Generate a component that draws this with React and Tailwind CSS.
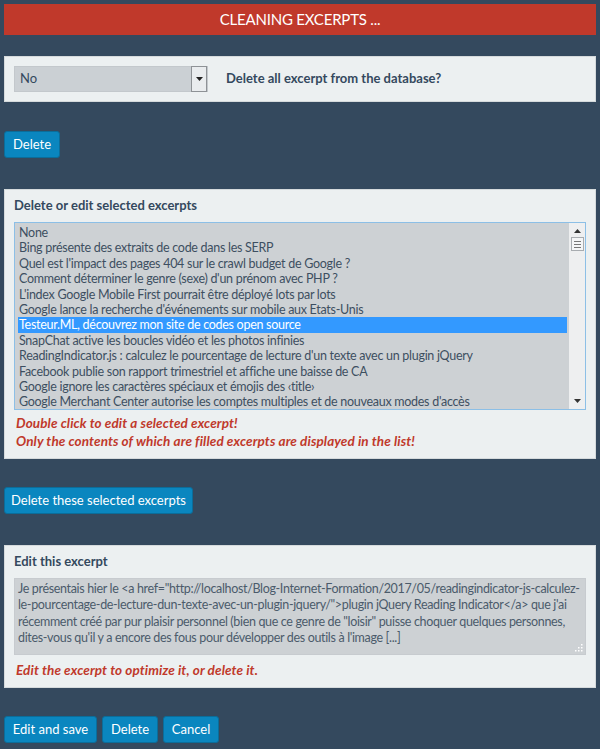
import React from "react";

const items = [
  "None",
  "Bing présente des extraits de code dans les SERP",
  "Quel est l'impact des pages 404 sur le crawl budget de Google ?",
  "Comment déterminer le genre (sexe) d'un prénom avec PHP ?",
  "L'index Google Mobile First pourrait être déployé lots par lots",
  "Google lance la recherche d'événements sur mobile aux Etats-Unis",
  "Testeur.ML, découvrez mon site de codes open source",
  "SnapChat active les boucles vidéo et les photos infinies",
  "ReadingIndicator.js : calculez le pourcentage de lecture d'un texte avec un plugin jQuery",
  "Facebook publie son rapport trimestriel et affiche une baisse de CA",
  "Google ignore les caractères spéciaux et émojis des ‹title›",
  "Google Merchant Center autorise les comptes multiples et de nouveaux modes d'accès",
];

const textLines = [
  'Je présentais hier le <a href="http://localhost/Blog-Internet-Formation/2017/05/readingindicator-js-calculez-',
  'le-pourcentage-de-lecture-dun-texte-avec-un-plugin-jquery/">plugin jQuery Reading Indicator</a> que j\'ai',
  'récemment créé par pur plaisir personnel (bien que ce genre de "loisir" puisse choquer quelques personnes,',
  "dites-vous qu'il y a encore des fous pour développer des outils à l'image [...]",
];

function Btn({ children, w }) {
  return (
    <button
      className={`h-[27px] ${w} rounded-[3px] bg-[#0a86bf] border border-[#0b6d9a] text-white text-[13px] flex items-center justify-center`}
    >
      {children}
    </button>
  );
}

export default function App() {
  return (
    <div
      className="min-h-[749px] bg-[#34495e] p-1 text-[#34495e]"
      style={{ fontFamily: "Lato, 'Open Sans', sans-serif" }}
    >
      <div className="h-[31px] bg-[#c0392b] flex items-center justify-center text-white text-[15px] tracking-[-0.2px]">
        CLEANING EXCERPTS ...
      </div>

      <div className="mt-[21px] h-[46px] bg-[#ecf0f1] border border-[#d5dadc] flex items-center pl-[9px]">
        <div className="w-[194px] h-[26px] bg-[#cbd0d4] border border-[#c3c8cc] flex items-center">
          <span className="flex-1 pl-[5px] text-[13px] text-[#34495e]">No</span>
          <div className="w-[16px] h-[26px] bg-[#e9ecee] border border-[#8e9296] flex items-center justify-center">
            <svg width="7" height="4" viewBox="0 0 7 4">
              <path d="M0 0 L7 0 L3.5 4 Z" fill="#222" />
            </svg>
          </div>
        </div>
        <span className="ml-[18px] text-[13px] font-bold text-[#34495e]">
          Delete all excerpt from the database?
        </span>
      </div>

      <div className="mt-[29px]">
        <Btn w="w-[56px]">Delete</Btn>
      </div>

      <div className="mt-[31px] h-[270px] bg-[#ecf0f1] border border-[#d5dadc] px-[9px] pt-[7px]">
        <div className="text-[13px] font-bold leading-[16px] text-[#34495e]">
          Delete or edit selected excerpts
        </div>
        <div className="mt-[9px] h-[188px] border border-[#8cbfe6] bg-[#cdd1d4] flex overflow-hidden">
          <div className="flex-1 pt-[2px] pl-[3px] pr-[2px]">
            {items.map((t, i) => (
              <div
                key={i}
                className={`h-[15.4px] leading-[15.4px] text-[12.5px] tracking-[-0.28px] whitespace-nowrap pl-[1px] ${
                  i === 6 ? "bg-[#3399ff] text-white" : "text-[#3d4f61]"
                }`}
              >
                {t}
              </div>
            ))}
          </div>
          <div className="w-[16px] bg-[#eeeff0] flex flex-col items-center">
            <svg className="mt-[6px]" width="7" height="4" viewBox="0 0 7 4">
              <path d="M3.5 0 L7 4 L0 4 Z" fill="#333" />
            </svg>
            <div className="mt-[4px] w-[13px] h-[14px] border border-[#a8acb0] bg-[#f4f5f6] flex flex-col items-center justify-center gap-[2px]">
              <div className="w-[7px] h-[1px] bg-[#777]" />
              <div className="w-[7px] h-[1px] bg-[#777]" />
              <div className="w-[7px] h-[1px] bg-[#777]" />
            </div>
            <div className="flex-1" />
            <svg className="mb-[6px]" width="7" height="4" viewBox="0 0 7 4">
              <path d="M0 0 L7 0 L3.5 4 Z" fill="#333" />
            </svg>
          </div>
        </div>
        <div className="mt-[4px] pl-[2px] text-[13.5px] tracking-[0.1px] italic font-bold text-[#c0392b] leading-[18px]">
          Double click to edit a selected excerpt!
        </div>
        <div className="pl-[2px] text-[13.5px] tracking-[0.1px] italic font-bold text-[#c0392b] leading-[18px]">
          Only the contents of which are filled excerpts are displayed in the list!
        </div>
      </div>

      <div className="mt-[28px]">
        <Btn w="w-[189px]">Delete these selected excerpts</Btn>
      </div>

      <div className="mt-[31px] h-[143px] bg-[#ecf0f1] border border-[#d5dadc] px-[9px] pt-[7px]">
        <div className="text-[13px] font-bold leading-[16px] text-[#34495e]">
          Edit this excerpt
        </div>
        <div className="relative mt-[9px] h-[77px] border border-[#c7cbcf] bg-[#cdd1d4] px-[3px] pt-[2px] overflow-hidden">
          {textLines.map((t, i) => (
            <div key={i} className="text-[12.5px] tracking-[-0.34px] leading-[16.3px] whitespace-nowrap text-[#4b5b6b]">
              {t}
            </div>
          ))}
          <svg className="absolute right-[2px] bottom-[2px]" width="8" height="8" viewBox="0 0 8 8">
            <rect x="6" y="0" width="1.5" height="1.5" fill="#fff" />
            <rect x="6" y="3" width="1.5" height="1.5" fill="#fff" />
            <rect x="3" y="3" width="1.5" height="1.5" fill="#fff" />
            <rect x="6" y="6" width="1.5" height="1.5" fill="#fff" />
            <rect x="3" y="6" width="1.5" height="1.5" fill="#fff" />
            <rect x="0" y="6" width="1.5" height="1.5" fill="#fff" />
          </svg>
        </div>
        <div className="mt-[6px] pl-[2px] text-[13.5px] tracking-[0.1px] italic font-bold text-[#c0392b] leading-[18px]">
          Edit the excerpt to optimize it, or delete it.
        </div>
      </div>

      <div className="mt-[28px] flex gap-[5px]">
        <Btn w="w-[93px]">Edit and save</Btn>
        <Btn w="w-[56px]">Delete</Btn>
        <Btn w="w-[56px]">Cancel</Btn>
      </div>
    </div>
  );
}
